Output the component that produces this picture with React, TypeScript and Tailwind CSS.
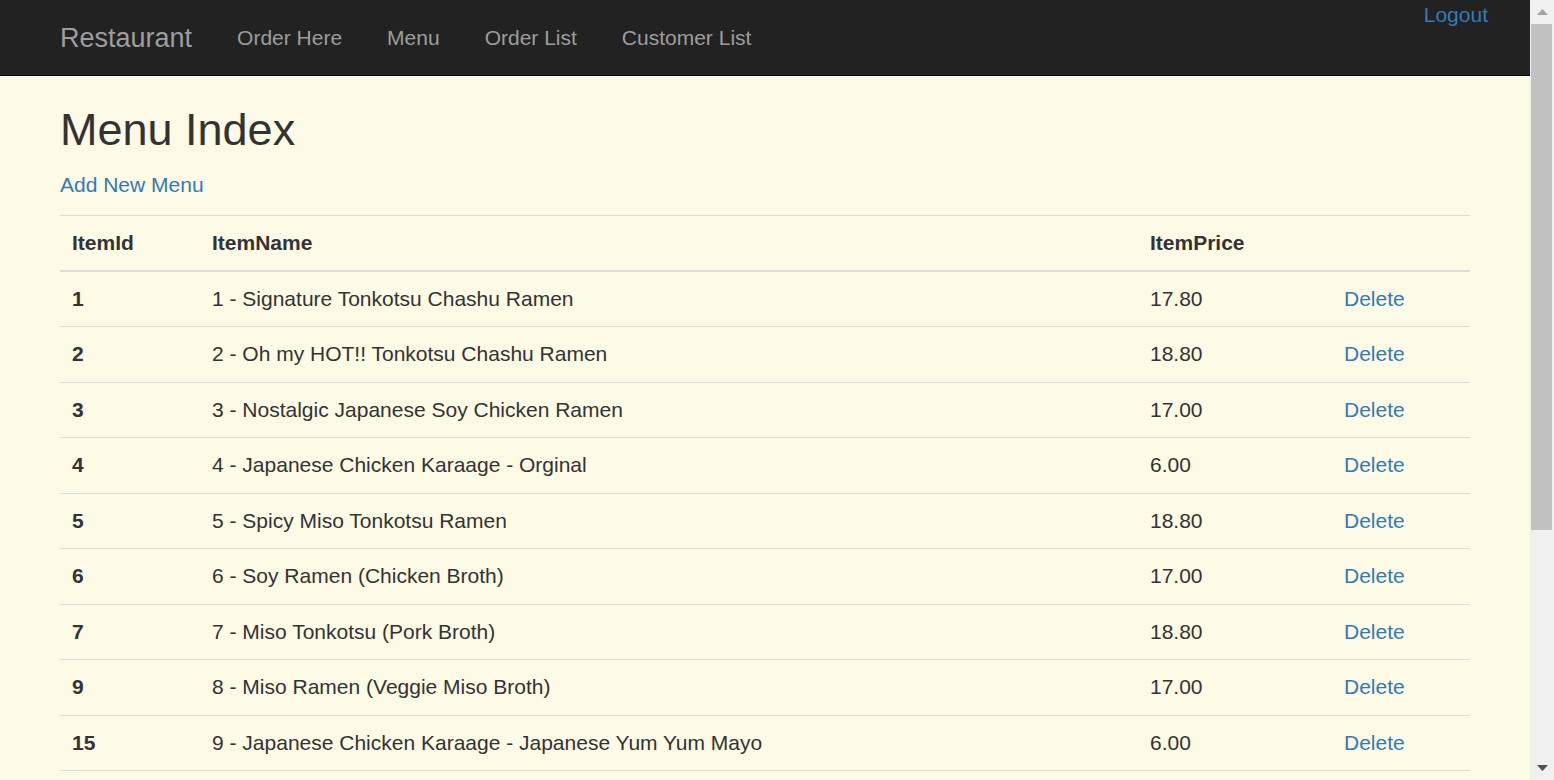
import React from 'react';

interface MenuItem {
    id: number;
    name: string;
    price: string;
}

const items: MenuItem[] = [
    { id: 1, name: '1 - Signature Tonkotsu Chashu Ramen', price: '17.80' },
    { id: 2, name: '2 - Oh my HOT!! Tonkotsu Chashu Ramen', price: '18.80' },
    { id: 3, name: '3 - Nostalgic Japanese Soy Chicken Ramen', price: '17.00' },
    { id: 4, name: '4 - Japanese Chicken Karaage - Orginal', price: '6.00' },
    { id: 5, name: '5 - Spicy Miso Tonkotsu Ramen', price: '18.80' },
    { id: 6, name: '6 - Soy Ramen (Chicken Broth)', price: '17.00' },
    { id: 7, name: '7 - Miso Tonkotsu (Pork Broth)', price: '18.80' },
    { id: 9, name: '8 - Miso Ramen (Veggie Miso Broth)', price: '17.00' },
    { id: 15, name: '9 - Japanese Chicken Karaage - Japanese Yum Yum Mayo', price: '6.00' },
];

const navLinks = ['Order Here', 'Menu', 'Order List', 'Customer List'];

const Navbar: React.FC = () => (
    <nav className="h-[76px] bg-[#222222] border-b border-[#080808]">
        <div className="w-[1455px] mx-auto px-[22.5px] flex">
            <a className="py-[22.5px] pr-[22.5px] text-[27px] leading-[30px] text-[#9d9d9d]">Restaurant</a>
            <ul className="flex">
                {navLinks.map((l) => (
                    <li key={l}>
                        <a className="block px-[22.5px] py-[22.5px] text-[21px] leading-[30px] text-[#9d9d9d]">{l}</a>
                    </li>
                ))}
            </ul>
            <a className="ml-auto -mr-[18px] self-start text-[21px] leading-[30px] text-[#337ab7]">Logout</a>
        </div>
    </nav>
);

const Scrollbar: React.FC = () => (
    <aside className="w-[24px] shrink-0 h-screen bg-[#f0f0f0] flex flex-col">
        <div className="h-[24px] flex items-center justify-center">
            <svg width="11" height="6" viewBox="0 0 11 6">
                <path d="M5.5 0 L11 6 L0 6 Z" fill="#a3a3a3" />
            </svg>
        </div>
        <div className="h-[506px] ml-[1px] mr-[2px] bg-[#c1c1c1]" />
        <div className="flex-1" />
        <div className="h-[24px] flex items-center justify-center">
            <svg width="11" height="6" viewBox="0 0 11 6">
                <path d="M0 0 L11 0 L5.5 6 Z" fill="#505050" />
            </svg>
        </div>
    </aside>
);

export default function App() {
    return (
        <div className="flex h-screen overflow-hidden bg-[#fdfae6] font-['Liberation_Sans',Arial,sans-serif] text-[#333333]">
            <main className="flex-1 overflow-hidden">
                <Navbar />
                <div className="w-[1455px] mx-auto px-[22.5px] pt-[29px]">
                    <h2 className="text-[45px] leading-[49.5px] font-normal mb-[15px]">Menu Index</h2>
                    <p className="text-[21px] leading-[30px] mb-[15px]">
                        <a className="text-[#337ab7]">Add New Menu</a>
                    </p>
                    <table className="w-full table-fixed border-separate border-spacing-0 text-[21px] leading-[30px] text-left">
                        <thead>
                            <tr>
                                <th className="w-[140px] px-[12px] py-[12px] border-t border-b-2 border-[#dddddd] font-bold">ItemId</th>
                                <th className="w-[938px] px-[12px] py-[12px] border-t border-b-2 border-[#dddddd] font-bold">ItemName</th>
                                <th className="w-[194px] px-[12px] py-[12px] border-t border-b-2 border-[#dddddd] font-bold">ItemPrice</th>
                                <th className="px-[12px] py-[12px] border-t border-b-2 border-[#dddddd]"></th>
                            </tr>
                        </thead>
                        <tbody>
                            {items.map((it) => (
                                <tr key={it.id}>
                                    <td className="px-[12px] pt-[12px] pb-[12.5px] border-b border-[#dddddd] font-bold">{it.id}</td>
                                    <td className="px-[12px] pt-[12px] pb-[12.5px] border-b border-[#dddddd]">{it.name}</td>
                                    <td className="px-[12px] pt-[12px] pb-[12.5px] border-b border-[#dddddd]">{it.price}</td>
                                    <td className="px-[12px] pt-[12px] pb-[12.5px] border-b border-[#dddddd]">
                                        <a className="text-[#337ab7]">Delete</a>
                                    </td>
                                </tr>
                            ))}
                        </tbody>
                    </table>
                </div>
            </main>
            <Scrollbar />
        </div>
    );
}
